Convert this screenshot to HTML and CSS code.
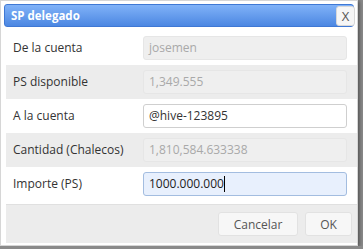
FILE: index.html
```html
<!DOCTYPE html>
<html lang="es">
<head>
    <meta charset="UTF-8">
    <meta name="viewport" content="width=device-width, initial-scale=1.0">
    <title>SP delegado</title>
    <link rel="stylesheet" href="styles.css">
</head>
<body>
    <div class="dialogo">
        <div class="titulo">
            <span>SP delegado</span>
            <button class="cerrar">X</button>
        </div>

        <div class="contenido">
            <div class="fila">
                <label>De la cuenta</label>
                <div class="campo bloqueado">josemen</div>
            </div>
            <div class="fila gris">
                <label>PS disponible</label>
                <div class="campo bloqueado">1,349.555</div>
            </div>
            <div class="fila">
                <label>A la cuenta</label>
                <div class="campo">@hive-123895</div>
            </div>
            <div class="fila gris">
                <label>Cantidad (Chalecos)</label>
                <div class="campo bloqueado">1,810,584.633338</div>
            </div>
            <div class="fila">
                <label>Importe (PS)</label>
                <div class="campo activo">1000.000.000<span class="cursor"></span></div>
            </div>
        </div>

        <div class="botones">
            <button class="boton cancelar">Cancelar</button>
            <button class="boton ok">OK</button>
        </div>
    </div>
</body>
</html>
```

FILE: styles.css
```css
body {
    margin: 0;
    background-color: #8a8a8a;
    font-family: "Open Sans", Arial, sans-serif;
    font-size: 12px;
    color: #333;
}

.dialogo {
    box-sizing: border-box;
    width: 358px;
    height: 246px;
    padding: 3px 0 0 3px;
    background-color: #fff;
    border: 1px solid #d6d6d6;
    box-shadow: 1px 1px 4px rgba(0, 0, 0, 0.5);
}

.titulo {
    box-sizing: border-box;
    width: 350px;
    height: 23px;
    padding-left: 6px;
    display: flex;
    align-items: center;
    justify-content: space-between;
    background: linear-gradient(#80b2f8, #4c87e2);
    border: 1px solid #3f78d4;
    border-radius: 3px;
    color: #fff;
    font-size: 11.5px;
    font-weight: bold;
}

.cerrar {
    box-sizing: border-box;
    width: 19px;
    height: 20px;
    margin-right: -2px;
    padding: 0;
    border: 1px solid #d8d8d8;
    border-radius: 3px;
    background-color: #f6f6f6;
    color: #555;
    font-family: "Open Sans", Arial, sans-serif;
    font-size: 13px;
}

.contenido {
    margin: 4px 0 0 2px;
    width: 351px;
}

.fila {
    height: 34px;
    box-sizing: border-box;
    padding: 5px 10px 5px 7px;
    display: flex;
    align-items: flex-start;
}

.fila.gris {
    background-color: #ececec;
}

.fila label {
    width: 130px;
    line-height: 24px;
}

.campo {
    box-sizing: border-box;
    width: 204px;
    height: 24px;
    padding-left: 5px;
    line-height: 22px;
    background-color: #fff;
    border: 1px solid #cfcfcf;
    border-radius: 3px;
}

.campo.bloqueado {
    background-color: #efefef;
    border-color: #e6e6e6;
    color: #a9a9a9;
}

.campo.activo {
    background-color: #e8f0fd;
    border-color: #a3bde0;
    color: #222;
}

.cursor {
    display: inline-block;
    width: 1px;
    height: 16px;
    vertical-align: -4px;
    background-color: #000;
}

.botones {
    box-sizing: border-box;
    width: 351px;
    height: 39px;
    margin: 3px 0 0 2px;
    padding: 7px 5px 0 0;
    display: flex;
    justify-content: flex-end;
    gap: 7px;
    background-color: #ececec;
    border-top: 1px solid #e0e0e0;
}

.boton {
    height: 24px;
    padding: 0;
    border: 1px solid #e2e2e2;
    border-radius: 3px;
    background-color: #f7f7f7;
    color: #555;
    font-family: "Open Sans", Arial, sans-serif;
    font-size: 12px;
    cursor: pointer;
}

.cancelar {
    width: 80px;
}

.ok {
    width: 47px;
}
```
